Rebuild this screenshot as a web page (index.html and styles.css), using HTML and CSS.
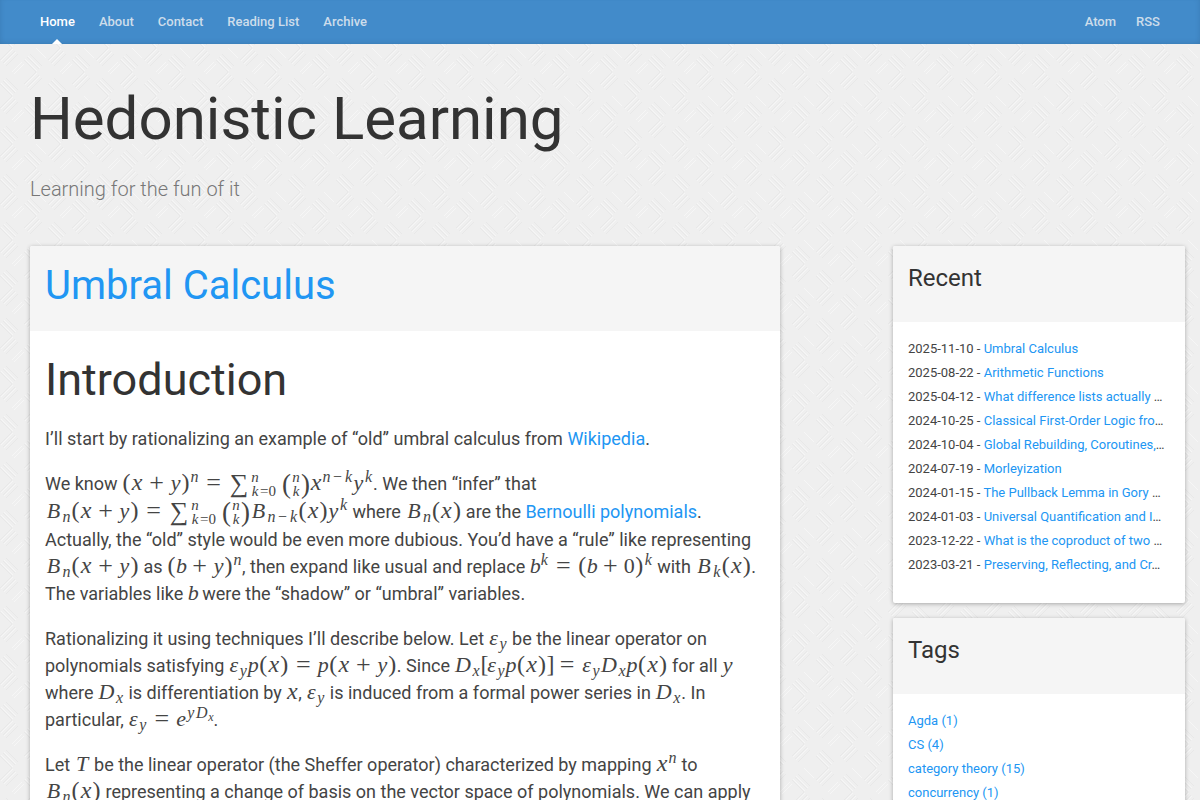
FILE: index.html
```html
<!DOCTYPE html>
<html lang="en">
<head>
<meta charset="utf-8">
<meta name="viewport" content="width=device-width, initial-scale=1">
<title>Hedonistic Learning</title>
<link rel="stylesheet" href="styles.css">
</head>
<body>
<nav class="navbar">
  <div class="nav-group nav-left">
    <a class="active" href="#">Home</a>
    <a href="#">About</a>
    <a href="#">Contact</a>
    <a href="#">Reading List</a>
    <a href="#">Archive</a>
  </div>
  <div class="nav-group nav-right">
    <a href="#">Atom</a>
    <a href="#">RSS</a>
  </div>
</nav>
<header class="masthead">
  <h1>Hedonistic Learning</h1>
  <p>Learning for the fun of it</p>
</header>
<div class="layout">
  <main class="card">
    <div class="card-head post-head"><h2><a href="#">Umbral Calculus</a></h2></div>
    <article class="post">
      <h1>Introduction</h1>
      <p>I’ll start by rationalizing an example of “old” umbral calculus from <a href="#">Wikipedia</a>.</p>
      <p>We know <span class="math"><b>(</b><i class="x">x</i><s class="plus">+</s><i>y</i><b>)</b><sup><i>n</i></sup><s>=</s><span class="sum"><span class="sigma">∑</span><span class="stack"><span><i>n</i></span><span><i>k</i>=0</span></span></span><span class="binom"><span>(</span><span class="stack"><i>n</i><i>k</i></span><span>)</span></span><i class="x">x</i><sup><i>n</i><u>−</u><i>k</i></sup><i>y</i><sup><i>k</i></sup></span>. We then “infer” that <br><span class="math"><i class="cap">B</i><sub><i>n</i></sub><b>(</b><i class="x">x</i><s class="plus">+</s><i>y</i><b>)</b><s>=</s><span class="sum"><span class="sigma">∑</span><span class="stack"><span><i>n</i></span><span><i>k</i>=0</span></span></span><span class="binom"><span>(</span><span class="stack"><i>n</i><i>k</i></span><span>)</span></span><i class="cap">B</i><sub><i>n</i><u>−</u><i>k</i></sub><b>(</b><i class="x">x</i><b>)</b><i>y</i><sup><i>k</i></sup></span> where <span class="math"><i class="cap">B</i><sub><i>n</i></sub><b>(</b><i class="x">x</i><b>)</b></span> are the <a href="#">Bernoulli polynomials</a>. <br>Actually, the “old” style would be even more dubious. You’d have a “rule” like representing <br><span class="math"><i class="cap">B</i><sub><i>n</i></sub><b>(</b><i class="x">x</i><s class="plus">+</s><i>y</i><b>)</b></span> as <span class="math"><b>(</b><i class="thin">b</i><s class="plus">+</s><i>y</i><b>)</b><sup><i>n</i></sup></span>, then expand like usual and replace <span class="math"><i class="thin">b</i><sup><i>k</i></sup><s>=</s><b>(</b><i class="thin">b</i><s class="plus">+</s>0<b>)</b><sup><i>k</i></sup></span> with <span class="math"><i class="cap">B</i><sub><i>k</i></sub><b>(</b><i class="x">x</i><b>)</b></span>. <br>The variables like <span class="math"><i class="thin">b</i></span> were the “shadow” or “umbral” variables.</p>
      <p>Rationalizing it using techniques I’ll describe below. Let <span class="math"><i class="thin">ε</i><sub><i>y</i></sub></span> be the linear operator on <br>polynomials satisfying <span class="math"><i class="thin">ε</i><sub><i>y</i></sub><i>p</i><b>(</b><i class="x">x</i><b>)</b><s>=</s><i>p</i><b>(</b><i class="x">x</i><s class="plus">+</s><i>y</i><b>)</b></span>. Since <span class="math"><i class="cap">D</i><sub><i>x</i></sub><b class="sq">[</b><i class="thin">ε</i><sub><i>y</i></sub><i>p</i><b>(</b><i class="x">x</i><b>)</b><b class="sq">]</b><s>=</s><i class="thin">ε</i><sub><i>y</i></sub><i class="cap">D</i><sub><i>x</i></sub><i>p</i><b>(</b><i class="x">x</i><b>)</b></span> for all <span class="math"><i>y</i></span> <br>where <span class="math"><i class="cap">D</i><sub><i>x</i></sub></span> is differentiation by <span class="math"><i class="x">x</i></span>, <span class="math"><i class="thin">ε</i><sub><i>y</i></sub></span> is induced from a formal power series in <span class="math"><i class="cap">D</i><sub><i>x</i></sub></span>. In <br>particular, <span class="math"><i class="thin">ε</i><sub><i>y</i></sub><s>=</s><i class="thin">e</i><sup><i>y</i><i class="cap">D</i><small>x</small></sup></span>.</p>
      <p>Let <span class="math"><i class="tee">T</i></span> be the linear operator (the Sheffer operator) characterized by mapping <span class="math"><i class="x">x</i><sup><i>n</i></sup></span> to <br><span class="math"><i class="cap">B</i><sub><i>n</i></sub><b>(</b><i class="x">x</i><b>)</b></span> representing a change of basis on the vector space of polynomials. We can apply</p>
    </article>
  </main>
  <aside>
    <section class="card">
      <div class="card-head"><h3>Recent</h3></div>
      <ul class="list">
        <li>2025-11-10 - <a href="#">Umbral Calculus</a></li>
        <li>2025-08-22 - <a href="#">Arithmetic Functions</a></li>
        <li>2025-04-12 - <a href="#">What difference lists actually </a>…</li>
        <li>2024-10-25 - <a href="#">Classical First-Order Logic fro</a>…</li>
        <li>2024-10-04 - <a href="#">Global Rebuilding, Coroutines,</a>…</li>
        <li>2024-07-19 - <a href="#">Morleyization</a></li>
        <li>2024-01-15 - <a href="#">The Pullback Lemma in Gory </a>…</li>
        <li>2024-01-03 - <a href="#">Universal Quantification and I</a>…</li>
        <li>2023-12-22 - <a href="#">What is the coproduct of two </a>…</li>
        <li>2023-03-21 - <a href="#">Preserving, Reflecting, and Cr</a>…</li>
      </ul>
    </section>
    <section class="card">
      <div class="card-head"><h3>Tags</h3></div>
      <ul class="list">
        <li><a href="#">Agda (1)</a></li>
        <li><a href="#">CS (4)</a></li>
        <li><a href="#">category theory (15)</a></li>
        <li><a href="#">concurrency (1)</a></li>
      </ul>
    </section>
  </aside>
</div>
</body>
</html>
```
FILE: styles.css
```css
* { box-sizing: border-box; }
html { height: 100%; overflow: hidden; }
body {
  margin: 0;
  height: 100%;
  overflow: hidden;
  font-family: Roboto, sans-serif;
  color: #444;
  background: #efefef url("data:image/svg+xml,%3Csvg xmlns='http://www.w3.org/2000/svg' width='48' height='48'%3E%3Cg fill='none' stroke-width='1'%3E%3Cpath stroke='%23e8e8e8' d='M0 12L12 0M3 15L15 3M6 18L18 6M24 36L36 24M27 39L39 27M30 42L42 30M24 12l12 12M27 9l12 12M30 6l12 12M0 36l12 12M3 33l12 12M6 30l12 12'/%3E%3Cpath stroke='%23f6f6f6' d='M1 13L13 1M4 16L16 4M25 37L37 25M28 40L40 28M25 11l12 12M28 8l12 12M1 35l12 12M4 32l12 12M12 24l10-10M36 0l10 10M14 26l10-10'/%3E%3C/g%3E%3C/svg%3E");
}
a { color: #2196f3; text-decoration: none; }

.navbar {
  display: flex;
  justify-content: space-between;
  height: 44px;
  padding: 0 30px;
  background: #428bca;
  box-shadow: inset 0 -4px 6px -4px rgba(0, 0, 0, .12), inset 4px 0 6px -4px rgba(0, 0, 0, .08), inset -4px 0 6px -4px rgba(0, 0, 0, .08);
}
.nav-group { display: flex; }
.nav-left { gap: 4px; }
.nav-group a {
  position: relative;
  padding: 0 10px;
  font-size: 13px;
  font-weight: 500;
  line-height: 43px;
  color: #cdddeb;
}
.nav-group .active { color: #fff; }
.active::after {
  content: "";
  position: absolute;
  bottom: 0;
  left: 50%;
  margin-left: -5px;
  border: 5px solid transparent;
  border-top: 0;
  border-bottom-color: #fff;
}

.masthead { padding: 40px 30px; }
.masthead h1 {
  margin: 0;
  font-size: 60px;
  font-weight: 400;
  line-height: 70px;
  color: #333;
}
.masthead p {
  margin: 20px 0 2px;
  font-size: 20px;
  font-weight: 300;
  line-height: 30px;
  color: #777;
}

.layout {
  display: grid;
  grid-template-columns: minmax(0, 750fr) minmax(0, 292fr);
  column-gap: 113px;
  align-items: start;
  padding: 0 15px 0 30px;
}
.card {
  margin-bottom: 15px;
  background: #fff;
  border-radius: 2px;
  box-shadow: 0 1px 4px rgba(0, 0, 0, .3);
}
.card-head {
  padding: 15px;
  height: 76px;
  background: #f5f5f5;
  border-radius: 2px 2px 0 0;
}
.card-head h3 { margin: 0; font-size: 24px; font-weight: 400; line-height: 34px; color: #333; }
.post-head { height: 85px; }
.post-head h2 { margin: 0; font-size: 40px; font-weight: 400; line-height: 50px; }

.post { padding: 15px; font-size: 18px; line-height: 27px; }
.post h1 { margin: 10px 0 21px; font-size: 45px; font-weight: 400; line-height: 48px; color: #333; }
.post p { margin: 0 0 18px; }

.list {
  margin: 0;
  padding: 15px 15px 26px;
  list-style: none;
  font-size: 13px;
  line-height: 24px;
}
.list li { overflow: hidden; text-overflow: ellipsis; white-space: nowrap; }

/* Inline mathematics */
.math { font: 22px/1 "Liberation Serif", serif; white-space: nowrap; }
.math i, .math b, .math s, .math u {
  display: inline-block;
  width: 11px;
  line-height: 20px;
  text-align: center;
}
.math b { width: 9px; font-weight: 400; font-size: 24px; }
.math .sq { width: 6px; }
.math .x { width: 12px; font-size: 24px; }
.math .thin { width: 10px; }
.math .cap { width: 17px; }
.math .tee { width: 15px; }
.math s { width: 29px; font-size: 26px; line-height: 16px; text-decoration: none; vertical-align: -1px; }
.math .plus { width: 27px; }
.math u { width: 13px; text-decoration: none; }
.math sup, .math sub { font-size: 16px; line-height: 0; }
.math sup { vertical-align: 8px; }
.math sub { vertical-align: -4px; }
.math sup i, .math sub i { width: 9px; line-height: 0; }
.math sup u, .math sub u { line-height: 0; }
.math sup .cap { width: 13px; }
.math small { font-size: 12px; font-style: italic; vertical-align: -3px; }
.sum, .binom { display: inline-flex; align-items: center; height: 28px; }
.sum { margin-right: 6px; vertical-align: -2px; }
.binom { vertical-align: -3px; }
.sigma { width: 22px; font-size: 26px; text-align: center; }
.stack { display: flex; flex-direction: column; font-size: 15px; line-height: 14px; }
.math .stack i { width: 10px; line-height: 14px; }
.binom > span:not(.stack) { width: 9px; font-size: 27px; line-height: 28px; text-align: center; }
```
